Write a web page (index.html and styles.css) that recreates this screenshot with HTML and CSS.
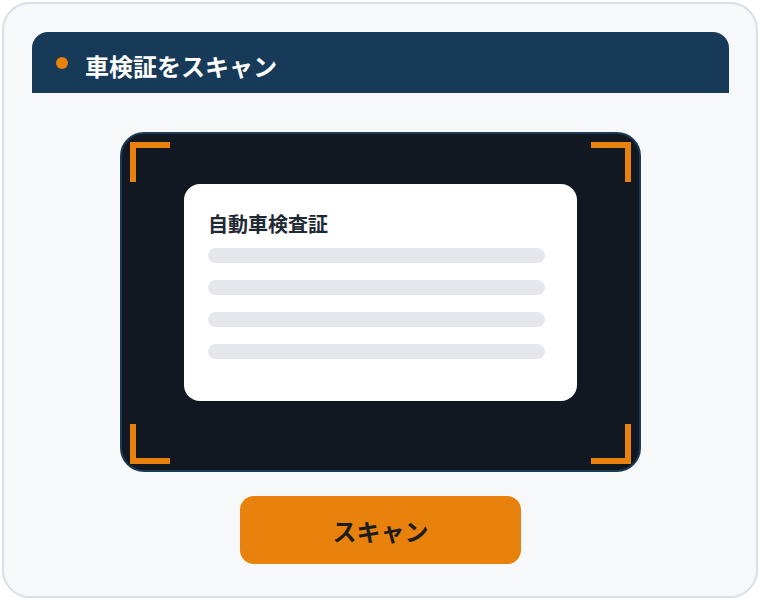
FILE: index.html
```html
<!DOCTYPE html>
<html lang="ja">
<head>
<meta charset="utf-8">
<title>車検証をスキャン</title>
<link rel="stylesheet" href="styles.css">
</head>
<body>
<div class="card">
  <div class="header">
    <span class="dot"></span>
    <h1 class="title">車検証をスキャン</h1>
  </div>
  <div class="scanner">
    <span class="corner tl"></span>
    <span class="corner tr"></span>
    <span class="corner bl"></span>
    <span class="corner br"></span>
    <div class="doc">
      <div class="doc-title">自動車検査証</div>
      <div class="lines">
        <div class="line"></div>
        <div class="line"></div>
        <div class="line"></div>
        <div class="line"></div>
      </div>
    </div>
  </div>
  <button class="scan-btn">スキャン</button>
</div>
</body>
</html>
```

FILE: styles.css
```css
* { box-sizing: border-box; }
html, body { margin: 0; padding: 0; background: #ffffff; }
body {
  padding: 2px;
  font-family: "Noto Sans CJK JP", "Noto Sans", sans-serif;
}
.card {
  width: 756px;
  height: 596px;
  border: 2px solid #d6dee7;
  border-radius: 28px;
  background: #f6f8fa;
  padding: 28px 27px 0 28px;
  display: flex;
  flex-direction: column;
  align-items: center;
}
.header {
  align-self: stretch;
  height: 61px;
  background: #163a57;
  border-radius: 16px 16px 0 0;
  display: flex;
  align-items: center;
  padding-left: 24px;
  gap: 17px;
}
.dot {
  width: 12px;
  height: 12px;
  border-radius: 50%;
  background: #e8820c;
  flex: none;
}
.title {
  margin: 0;
  color: #ffffff;
  font-size: 24px;
  font-weight: 700;
  line-height: 1;
  padding-top: 6px;
}
.scanner {
  position: relative;
  margin-top: 39px;
  width: 521px;
  height: 340px;
  background: #111821;
  border: 2px solid #1b3a55;
  border-radius: 24px;
  display: flex;
  justify-content: center;
  align-items: flex-start;
  padding-top: 50px;
}
.corner {
  position: absolute;
  width: 40px;
  height: 40px;
  border: 0 solid #e8820c;
}
.corner.tl { top: 8px; left: 8px; border-top-width: 6px; border-left-width: 6px; }
.corner.tr { top: 8px; right: 8px; border-top-width: 6px; border-right-width: 6px; }
.corner.bl { bottom: 6px; left: 8px; border-bottom-width: 6px; border-left-width: 6px; }
.corner.br { bottom: 6px; right: 8px; border-bottom-width: 6px; border-right-width: 6px; }
.doc {
  width: 393px;
  height: 217px;
  background: #ffffff;
  border-radius: 16px;
  padding: 28px 0 0 24px;
}
.doc-title {
  color: #1f2933;
  font-size: 20px;
  font-weight: 700;
  line-height: 24px;
}
.lines {
  margin-top: 12px;
  display: flex;
  flex-direction: column;
  gap: 17px;
}
.line {
  width: 337px;
  height: 15px;
  border-radius: 8px;
  background: #e4e8ec;
}
.scan-btn {
  margin-top: 24px;
  width: 281px;
  height: 68px;
  border: none;
  border-radius: 14px;
  background: #e8820c;
  color: #1c1c1c;
  font-family: "Noto Sans CJK JP", "Noto Sans", sans-serif;
  font-size: 24px;
  font-weight: 700;
  padding: 0;
}
```
